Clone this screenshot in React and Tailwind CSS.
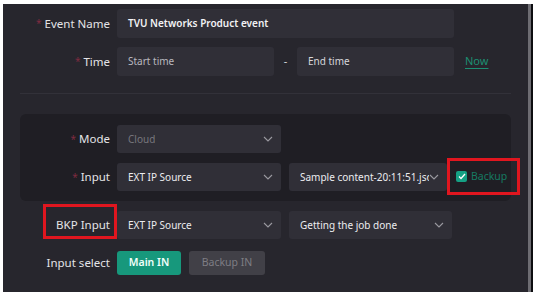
import React from "react";

const Chevron = () => (
  <svg width="10" height="6" viewBox="0 0 10 6" fill="none" className="shrink-0">
    <path d="M1 1l4 4 4-4" stroke="#9a99a0" strokeWidth="1.1" />
  </svg>
);

const Label = ({ req, children, className = "" }) => (
  <div className={"w-[114px] shrink-0 pr-[7px] flex justify-end items-center text-[11.5px] text-[#e4e4e7] " + className}>
    {req && <span className="text-[#7e2b40] mr-[3px] text-[10px]">*</span>}
    {children}
  </div>
);

const Select = ({ w, text, dim, bold }) => (
  <div
    className={`h-[28px] rounded-[3px] bg-[#302f37] flex items-center justify-between pl-[11px] pr-[8px] ${w}`}
  >
    <span className={`text-[10px] overflow-hidden whitespace-nowrap min-w-0 ${dim ? "text-[#77767d]" : "text-[#ececef]"} ${bold ? "font-semibold" : ""}`}>{text}</span>
    <Chevron />
  </div>
);

export default function App() {
  return (
    <div className="w-[538px] h-[296px] bg-white relative overflow-hidden" style={{ fontFamily: '"Noto Sans", "Open Sans", sans-serif' }}>
      <div className="absolute left-[3px] top-[4px] w-[525px] h-[288px] bg-[#27262d]">
        <div className="flex flex-col pt-[5px]">
          {/* Event Name */}
          <div className="flex items-center h-[29px]">
            <Label req>Event Name</Label>
            <div className="w-[337px] h-[29px] rounded-[3px] bg-[#302f37] flex items-center pl-[11px] text-[10px] font-semibold text-[#f2f2f4]">
              TVU Networks Product event
            </div>
          </div>
          {/* Time */}
          <div className="flex items-center h-[29px] mt-[9px]">
            <Label req>Time</Label>
            <div className="w-[157px] h-[29px] rounded-[3px] bg-[#302f37] flex items-center pl-[11px] text-[10px] text-[#b9b8bf]">
              Start time
            </div>
            <div className="w-[23px] text-center text-[#d8d8dc] text-[11px]">-</div>
            <div className="w-[157px] h-[29px] rounded-[3px] bg-[#302f37] flex items-center pl-[11px] text-[10px] text-[#d6d6da]">
              End time
            </div>
            <div className="ml-[11px] text-[11px] text-[#1c8f72] underline underline-offset-[3px] decoration-[#1c8f72]">Now</div>
          </div>
          {/* Divider */}
          <div className="mx-[17px] mt-[17px] h-px bg-[#323139]" />
          {/* Panel */}
          <div className="mx-[17px] mt-[20px] rounded-[6px] bg-[#1f1e24] pt-[11px] pb-[10px]">
            <div className="flex items-center -ml-[17px]">
              <Label req>Mode</Label>
              <Select w="w-[164px]" text="Cloud" dim />
            </div>
            <div className="flex items-center -ml-[17px] mt-[10px]">
              <Label req>Input</Label>
              <Select w="w-[164px]" text="EXT IP Source" />
              <div className="ml-[8px]">
                <Select w="w-[158px]" text="Sample content-20:11:51.json" />
              </div>
            </div>
          </div>
          {/* BKP Input */}
          <div className="flex items-center mt-[10px]">
            <Label>BKP Input</Label>
            <Select w="w-[164px]" text="EXT IP Source" />
            <div className="ml-[8px]">
              <Select w="w-[163px]" text="Getting the job done" />
            </div>
          </div>
          {/* Input select */}
          <div className="flex items-center mt-[12px]">
            <Label>Input select</Label>
            <div className="h-[24px] w-[64px] rounded-[3px] bg-[#17987c] flex items-center justify-center text-[10.5px] text-[#f0fffb] font-semibold">Main IN</div>
            <div className="ml-[8px] h-[24px] w-[76px] rounded-[3px] bg-[#414047] flex items-center justify-center text-[10.5px] text-[#7e7d84]">Backup IN</div>
          </div>
        </div>
        {/* Backup checkbox with red highlight */}
        <div className="absolute left-[444px] top-[154px] w-[73px] h-[37px] border-[3px] border-[#e0161f] flex items-center pl-[6px]">
          <div className="w-[11px] h-[11px] rounded-[2px] bg-[#15a084] flex items-center justify-center">
            <svg width="8" height="7" viewBox="0 0 8 7"><path d="M1 3.5l2 2L7 1" stroke="#fff" strokeWidth="1.3" fill="none" /></svg>
          </div>
          <span className="ml-[4px] text-[10.5px] text-[#167a62]">Backup</span>
        </div>
        {/* BKP red box */}
        <div className="absolute left-[40px] top-[200px] w-[74px] h-[35px] border-[3px] border-[#e0161f]" />
      </div>
      {/* Scrollbar */}
      <div className="absolute left-[528px] top-[4px] w-[3px] h-[288px] bg-[#6d6c72]" />
      <div className="absolute left-[531px] top-[4px] w-[2px] h-[288px] bg-[#0d0d10]" />
    </div>
  );
}
